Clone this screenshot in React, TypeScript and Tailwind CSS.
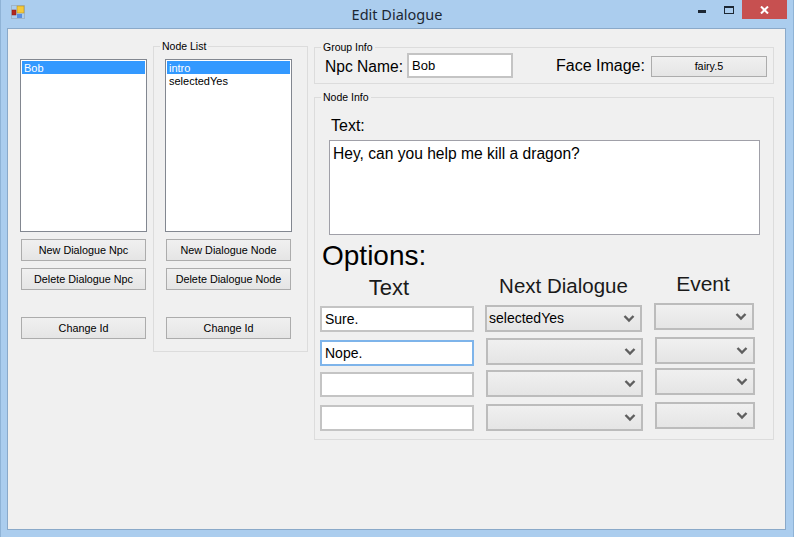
import React from "react";

const font = "font-['Liberation_Sans',sans-serif]";

function WinButton({ label, className = "" }: { label: string; className?: string }) {
  return (
    <div
      className={`h-[22px] flex items-center justify-center whitespace-nowrap border border-[#acacac] bg-gradient-to-b from-[#f0f0f0] to-[#e5e5e5] text-[10.8px] text-black ${className}`}
    >
      {label}
    </div>
  );
}

function ListBox({ items, className = "" }: { items: string[]; className?: string }) {
  return (
    <div className={`w-[127px] h-[173px] border border-[#828790] bg-white p-px text-[11px] leading-[13px] ${className}`}>
      {items.map((item, i) => (
        <div key={item} className={i === 0 ? "bg-[#3399ff] text-white pl-0.5 pt-px h-[13px]" : "text-black pl-0.5 pt-px h-[13px]"}>
          {item}
        </div>
      ))}
    </div>
  );
}

function TextInput({ value = "", focused = false, className = "" }: { value?: string; focused?: boolean; className?: string }) {
  return (
    <div
      className={`w-[154px] flex items-center pl-[3px] border-2 bg-white text-[14px] text-black ${
        focused ? "border-[#7eb4ea]" : "border-[#c4c4c4]"
      } ${className}`}
    >
      {value}
    </div>
  );
}

function Combo({ value = "", className = "" }: { value?: string; className?: string }) {
  return (
    <div
      className={`h-[27px] flex items-center justify-between pl-[2px] pr-[5px] border-2 border-[#bcbcbc] bg-gradient-to-b from-[#f0f0f0] to-[#e5e5e5] text-[14px] text-black ${className}`}
    >
      <span>{value}</span>
      <svg width="12" height="9" viewBox="0 0 12 9" fill="none">
        <path d="M1.5 2 L6 6.5 L10.5 2" stroke="#5f5f5f" strokeWidth="2.4" />
      </svg>
    </div>
  );
}

function GroupTitle({ title }: { title: string }) {
  return (
    <div className="w-fit -mt-[8px] ml-[6px] px-[2px] bg-[#f0f0f0] text-[10.5px] leading-[14px] whitespace-nowrap text-black">{title}</div>
  );
}

export default function App() {
  return (
    <div className={`w-[794px] h-[537px] overflow-hidden flex flex-col bg-[#abcdee] border-x border-[#8fb3d6] ${font}`}>
      {/* title bar */}
      <div className="h-[28px] shrink-0 grid grid-cols-[1fr_auto_1fr] items-start">
        <div className="pl-[10px] pt-[5px]">
          <svg width="16" height="16" viewBox="0 0 16 16">
            <rect x="0.5" y="0.5" width="13" height="13" fill="none" stroke="#9fb4c8" />
            <rect x="1" y="5" width="4" height="5" fill="#b3261e" stroke="#8a1c14" strokeWidth="0.5" />
            <rect x="6" y="1" width="7" height="7" fill="#f5c93a" stroke="#b08a1c" strokeWidth="0.5" />
            <rect x="6" y="9" width="5" height="4" fill="#5a8ee0" />
          </svg>
        </div>
        <div className="font-['Noto_Sans',sans-serif] text-[14.5px] leading-[28px] text-[#1c2733]">Edit Dialogue</div>
        <div className="flex justify-end pr-[6px]">
          <div className="w-[14px] h-[19px] flex items-end pb-[6px] mr-[12px]">
            <div className="w-[8px] h-[3px] bg-[#1c2733]" />
          </div>
          <div className="w-[10px] h-[8px] mt-[6px] mr-[8px] border border-t-2 border-[#1c2733]" />
          <div className="w-[45px] h-[19px] bg-[#c75050] flex items-center justify-center">
            <svg width="9" height="8" viewBox="0 0 9 8">
              <path d="M1 0.5 L8 7.5 M8 0.5 L1 7.5" stroke="#fff" strokeWidth="2" />
            </svg>
          </div>
        </div>
      </div>

      {/* client area */}
      <div className="ml-[6px] mr-[7px] h-[502px] border border-[#8aa9c9] bg-[#f0f0f0] flex items-start">
        {/* npc column */}
        <div className="ml-[12px] mt-[30px] w-[127px] flex flex-col">
          <ListBox items={["Bob"]} />
          <WinButton label="New Dialogue Npc" className="mx-px mt-[7px]" />
          <WinButton label="Delete Dialogue Npc" className="mx-px mt-[7px]" />
          <WinButton label="Change Id" className="mx-px mt-[27px]" />
        </div>

        {/* node list group */}
        <div className="ml-[6px] mt-[17px] w-[155px] h-[306px] border border-[#dcdcdc] flex flex-col">
          <GroupTitle title="Node List" />
          <div className="ml-[11px] mt-[6px] w-[127px] flex flex-col">
            <ListBox items={["intro", "selectedYes"]} />
            <WinButton label="New Dialogue Node" className="mx-px mt-[7px]" />
            <WinButton label="Delete Dialogue Node" className="mx-px mt-[7px]" />
            <WinButton label="Change Id" className="mx-px mt-[27px]" />
          </div>
        </div>

        {/* right side */}
        <div className="ml-[6px] mt-[18px] w-[460px] flex flex-col">
          <div className="h-[37px] border border-[#dcdcdc]">
            <GroupTitle title="Group Info" />
            <div className="flex items-start text-black">
              <div className="ml-[10px] mt-[3px] text-[15.6px] leading-[20px] whitespace-nowrap">Npc Name:</div>
              <TextInput value="Bob" className="!w-[106px] !text-[13px] h-[25px] ml-[4px] -mt-[1px] shrink-0" />
              <div className="ml-[43px] mt-[2px] text-[16px] leading-[20px] whitespace-nowrap">Face Image:</div>
              <WinButton label="fairy.5" className="w-[116px] shrink-0 ml-[6px] !h-[21px] mt-[2px]" />
            </div>
          </div>

          <div className="mt-[13px] h-[343px] border border-[#dcdcdc]">
            <GroupTitle title="Node Info" />
            <div className="ml-[16px] mt-[13px] text-[16px] leading-[18px] text-black">Text:</div>
            <div className="ml-[14px] mt-[5px] w-[431px] h-[95px] border border-[#a0a0a8] bg-white px-[3px] pt-[4px] text-[15.6px] leading-[17px] text-black">
              Hey, can you help me kill a dragon?
            </div>
            <div className="ml-[7px] mt-[5px] text-[28px] leading-[32px] text-black">Options:</div>
            <div className="flex items-start ml-[5px]">
              <div className="w-[165px] flex flex-col">
                <div className="w-[138px] text-center text-[22px] leading-[26px] text-[#1a1a1a] mt-[3px]">Text</div>
                <TextInput value="Sure." className="h-[26px] mt-[5px]" />
                <TextInput value="Nope." focused className="h-[26px] mt-[8px]" />
                <TextInput className="h-[25px] mt-[6px]" />
                <TextInput className="h-[26px] mt-[8px]" />
              </div>
              <div className="w-[169px] flex flex-col pt-px">
                <div className="w-[157px] text-center text-[20.5px] leading-[26px] text-[#1a1a1a]">Next Dialogue</div>
                <Combo value="selectedYes" className="w-[157px] mt-[6px]" />
                <Combo className="w-[157px] ml-px mt-[6px]" />
                <Combo className="w-[157px] ml-px mt-[5px]" />
                <Combo className="w-[157px] ml-px mt-[7px]" />
              </div>
              <div className="w-[101px] flex flex-col -mt-px">
                <div className="w-[98px] text-center text-[21px] leading-[26px] text-[#1a1a1a]">Event</div>
                <Combo className="w-[100px] mt-[6px]" />
                <Combo className="w-[100px] ml-px mt-[7px]" />
                <Combo className="w-[100px] ml-px mt-[4px]" />
                <Combo className="w-[100px] ml-px mt-[7px]" />
              </div>
            </div>
          </div>
        </div>
      </div>
    </div>
  );
}
